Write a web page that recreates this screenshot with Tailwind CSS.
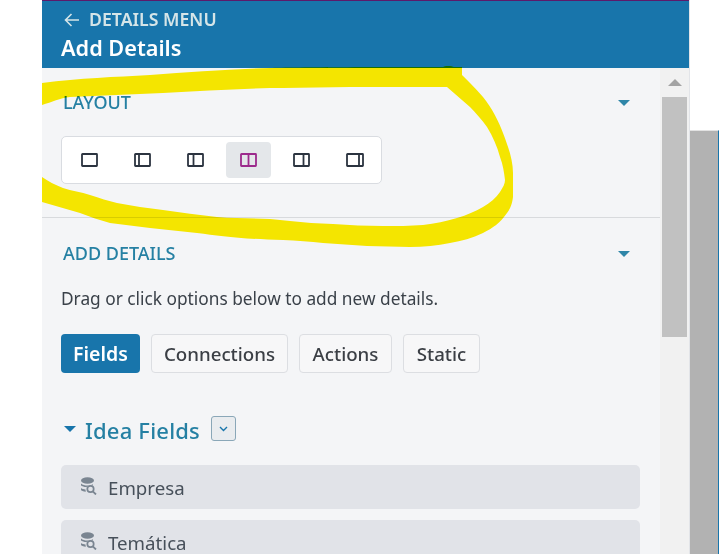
<!DOCTYPE html>
<html lang="en">
<head>
  <meta charset="UTF-8">
  <title>Add Details</title>
  <script src="https://cdn.jsdelivr.net/npm/@tailwindcss/browser@4"></script>
</head>
<body class="bg-white overflow-hidden font-['Noto_Sans',sans-serif]">
<div class="relative w-[719px] h-[554px] overflow-hidden">

  <!-- page behind the panel -->
  <div class="absolute left-[690px] top-[130px] w-[29px] h-[424px] bg-[#b2b2b2] border-r border-t border-r-[#1875ab] border-t-[#e2e2e2]"></div>

  <!-- details panel -->
  <div class="ml-[42px] w-[648px] h-[554px] flex flex-col border-r border-[#e2e4e8]">
    <div class="h-[1px] bg-[#5c1a6b]"></div>
    <header class="h-[67px] bg-[#1875ab] pl-[22px] pt-[8px]">
      <div class="flex items-center gap-[9px] h-[21px] text-[#d5e5e8] text-[17.7px] font-semibold">
        <svg class="w-[16px] h-[16px]" viewBox="0 0 16 16" fill="none" stroke="#d5e5e8" stroke-width="1.6"><path d="M15 8H1.5M7.5 2 1.5 8l6 6"/></svg>
        <span>DETAILS MENU</span>
      </div>
      <h1 class="text-white text-[21.7px] font-semibold leading-[28px] -ml-[3px] mt-[4px]">Add Details</h1>
    </header>

    <div class="flex flex-1 min-h-0 bg-[#f4f5f7]">
      <main class="w-[618px] flex flex-col">
        <section class="h-[150px] shrink-0 border-b border-[#d8dadd] pl-[19px] pr-[20px] relative">
          <div class="flex items-center justify-between pt-[23px] pl-[2px] pr-[10px] h-[46px]">
            <span class="text-[#2580a3] text-[18px] font-medium">LAYOUT</span>
            <span class="mt-[1px] w-0 h-0 border-x-[6px] border-x-transparent border-t-[6px] border-t-[#2e86a8]"></span>
          </div>
          <div class="mt-[22px] w-[321px] h-[48px] bg-white border border-[#d9dce1] rounded-[5px] flex items-center pl-[5px] gap-[8px]">
            <button class="w-[45px] h-[36px] shrink-0 flex items-center justify-center">
              <svg class="w-[17px] h-[14px]" viewBox="0 0 17 14" fill="none" stroke="#2c3440" stroke-width="1.8"><rect x="1" y="1" width="15" height="12" rx=".5"/></svg>
            </button>
            <button class="w-[45px] h-[36px] shrink-0 flex items-center justify-center">
              <svg class="w-[17px] h-[14px]" viewBox="0 0 17 14" fill="none" stroke="#2c3440" stroke-width="1.8"><rect x="1" y="1" width="15" height="12" rx=".5"/><path d="M5 1v12"/></svg>
            </button>
            <button class="w-[45px] h-[36px] shrink-0 flex items-center justify-center">
              <svg class="w-[17px] h-[14px]" viewBox="0 0 17 14" fill="none" stroke="#2c3440" stroke-width="1.8"><rect x="1" y="1" width="15" height="12" rx=".5"/><path d="M6.500 1v12"/></svg>
            </button>
            <button class="w-[45px] h-[36px] shrink-0 flex items-center justify-center bg-[#e4e7ea] rounded-[4px]">
              <svg class="w-[17px] h-[14px]" viewBox="0 0 17 14" fill="none" stroke="#9c2a8c" stroke-width="1.8"><rect x="1" y="1" width="15" height="12" rx=".5"/><path d="M8.500 1v12"/></svg>
            </button>
            <button class="w-[45px] h-[36px] shrink-0 flex items-center justify-center">
              <svg class="w-[17px] h-[14px]" viewBox="0 0 17 14" fill="none" stroke="#2c3440" stroke-width="1.8"><rect x="1" y="1" width="15" height="12" rx=".5"/><path d="M10.500 1v12"/></svg>
            </button>
            <button class="w-[45px] h-[36px] shrink-0 flex items-center justify-center">
              <svg class="w-[18px] h-[14px]" viewBox="0 0 18 14" fill="none" stroke="#2c3440" stroke-width="1.8"><rect x="1" y="1" width="16" height="12" rx=".5"/><path d="M13 1v12"/></svg>
            </button>
          </div>
        </section>

        <section class="shrink-0 pl-[19px] pr-[20px]">
          <div class="flex items-center justify-between pt-[24px] pl-[2px] pr-[10px] h-[46px]">
            <span class="text-[#2580a3] text-[18px] font-medium">ADD DETAILS</span>
            <span class="mt-[2px] w-0 h-0 border-x-[6px] border-x-transparent border-t-[6px] border-t-[#2e86a8]"></span>
          </div>
          <p class="mt-[23px] text-[#3a4149] text-[17.300px] leading-[24px] whitespace-nowrap">Drag or click options below to add new details.</p>
          <div class="flex gap-[11px] mt-[23px] text-[18.700px] font-medium">
            <button class="h-[39px] w-[79px] pt-[1px] rounded-[4px] bg-[#1875ab] text-white font-semibold text-[19.500px]">Fields</button>
            <button class="h-[39px] w-[137px] pt-[1px] rounded-[4px] border border-[#dcdee2] bg-[#f7f7f8] text-[#3b3f45]">Connections</button>
            <button class="h-[39px] w-[93px] pt-[1px] rounded-[4px] border border-[#dcdee2] bg-[#f7f7f8] text-[#3b3f45]">Actions</button>
            <button class="h-[39px] w-[77px] pt-[1px] rounded-[4px] border border-[#dcdee2] bg-[#f7f7f8] text-[#3b3f45]">Static</button>
          </div>
          <div class="flex items-center mt-[44px] h-[30px]">
            <span class="ml-[3px] -mt-[6px] w-0 h-0 border-x-[6px] border-x-transparent border-t-[6px] border-t-[#1875ab]"></span>
            <h2 class="ml-[9px] -mt-[4px] text-[#2580a3] text-[22px] tracking-[0.2px] font-medium">Idea Fields</h2>
            <button class="ml-[11px] -mt-[7px] w-[25px] h-[25px] border border-[#8aa7b8] rounded-[3px] bg-[#e9ecef] flex items-center justify-center">
              <svg class="w-[9px] h-[6px]" viewBox="0 0 9 6" fill="none" stroke="#1875ab" stroke-width="1.4"><path d="m1 1 3.5 3.5L8 1"/></svg>
            </button>
          </div>
          <ul class="mt-[18px] flex flex-col gap-[11px]">
            <li class="h-[44px] rounded-[5px] bg-[#e1e3e8] flex items-center pl-[19px] gap-[11px] text-[#47505a] text-[18.700px]">
              <svg class="w-[17px] h-[18px] shrink-0 -mt-[2px]" viewBox="0 0 17 18" fill="#7a8591"><ellipse cx="7.500" cy="3.500" rx="6.500" ry="3.200"/><path d="M1 6.500c1.500 1.500 4 2 6.500 2 2 0 4-.3 5.500-1.200v1.200a5.500 5.500 0 0 0-6.500 1.500C4 10 2 9.400 1 8.500zM1 11c1.200 1 2.800 1.400 4.500 1.500l.3 2.300C3.500 14.500 1 13.800 1 13z"/><circle cx="10.500" cy="12" r="3.200" fill="none" stroke="#7a8591" stroke-width="1.700"/><path d="m12.800 14.300 3.200 3.200" stroke="#7a8591" stroke-width="1.800" fill="none"/></svg>
              <span class="pt-[2px]">Empresa</span>
            </li>
            <li class="h-[44px] rounded-[5px] bg-[#e1e3e8] flex items-center pl-[19px] gap-[11px] text-[#47505a] text-[18.700px]">
              <svg class="w-[17px] h-[18px] shrink-0 -mt-[2px]" viewBox="0 0 17 18" fill="#7a8591"><ellipse cx="7.500" cy="3.500" rx="6.500" ry="3.200"/><path d="M1 6.500c1.500 1.500 4 2 6.500 2 2 0 4-.3 5.500-1.200v1.200a5.500 5.500 0 0 0-6.500 1.500C4 10 2 9.400 1 8.500zM1 11c1.200 1 2.800 1.400 4.500 1.500l.3 2.300C3.500 14.500 1 13.800 1 13z"/><circle cx="10.500" cy="12" r="3.200" fill="none" stroke="#7a8591" stroke-width="1.700"/><path d="m12.800 14.300 3.200 3.200" stroke="#7a8591" stroke-width="1.800" fill="none"/></svg>
              <span class="pt-[2px]">Temática</span>
            </li>
          </ul>
        </section>
      </main>

      <!-- scrollbar -->
      <div class="w-[29px] bg-[#f1f1f1] flex flex-col items-center shrink-0">
        <div class="h-[29px] shrink-0 flex items-center justify-center">
          <span class="w-0 h-0 border-x-[7px] border-x-transparent border-b-[7px] border-b-[#a3a3a3]"></span>
        </div>
        <div class="w-[25px] h-[240px] bg-[#c1c1c1]"></div>
      </div>
    </div>
  </div>

  <!-- highlighter scribble drawn over the screenshot -->
  <svg class="absolute left-0 top-0 pointer-events-none mix-blend-multiply" width="719" height="554" viewBox="0 0 719 554">
    <path fill="#ffef00" d="M42 83C80 78 115 77 150 75 190 72 230 69 270 68 290 67 400 67 443 67 444 65.500 452 65.500 454 67L462 67 462 75C472 85 478 91 483 97 492 108 499 122 503 133 508 146 513 160 513 173L513 197C512 205 510 209 507 213 500 223 493 228 483 233 472 238 462 241 450 243 437 245.500 424 247 410 247L367 246 323 243C310 241.500 297 240.500 283 240 240 239 220 236 197 233L150 228 110 223C100 220 90 217 80 213L42 202 42 177C48 181 55 185 63 188 72 191 81 192 90 195 100 198 108 201 117 203 132 206 148 208 163 210 181 212.500 199 215 217 217 235 218.500 252 218 270 219 277 219.500 283 220.500 290 221 304 222.500 318 223.500 333 224 350 225 366 226 383 226 397 226 410 226 423 225 435 223.500 446 221.500 457 218 467 215 475 211.500 483 207 490 203 496 198 500 192 503 187 505 184 505 180 504 172 503 165 500 157 497 146 493 137 487 127 482 120 476 113 470 107L447 87 350 87 283 88 270 88C235 89 198 91 163 93L70 97C60 98 52 102 42 105Z"/>
  </svg>
</div>
</body>
</html>
